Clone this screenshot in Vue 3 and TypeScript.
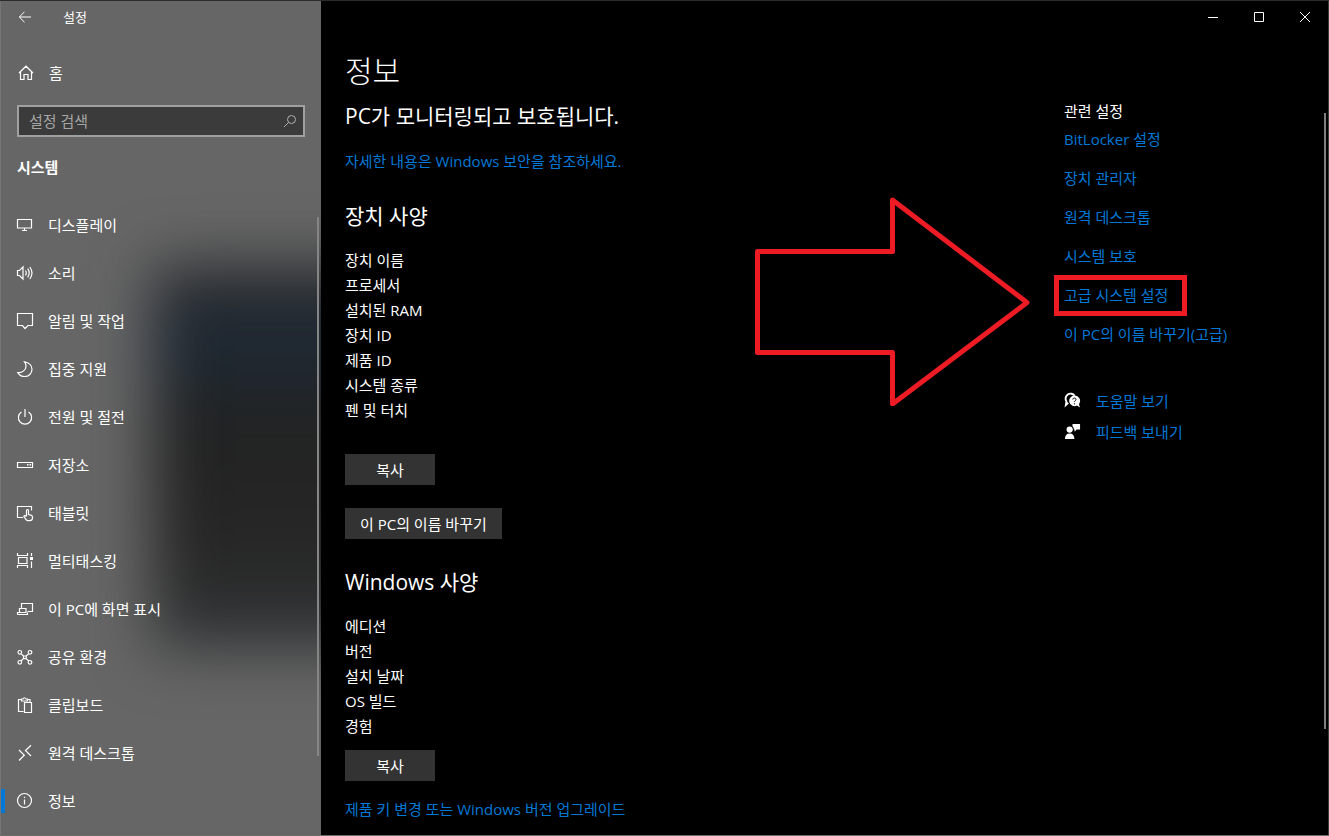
<script setup lang="ts">
import { ref } from 'vue'

interface NavItem {
  label: string
  path: string
  solid?: string
}

const query = ref('')
const current = ref('정보')

const navItems: NavItem[] = [
  { label: '디스플레이', path: 'M1.5 3.5h14v8.5h-14zM8.5 12v2M6 14.5h5' },
  {
    label: '소리',
    path: 'M1.5 6.5h2l3.5-3.5v12l-3.5-3.5h-2zM9.5 6.5q1.6 2.5 0 5M11.7 4.7q3 4.3 0 8.6M13.8 3q4.4 6 0 12'
  },
  { label: '알림 및 작업', path: 'M1.5 1.5h15v12h-4.500l-3 3-2.500-3h-5z' },
  {
    label: '집중 지원',
    path: 'M8.500 1.800C13 2.500 16 5.500 16 9.200C16 13.500 12.800 16.500 8.800 16.500C5.800 16.500 3.200 15 1.800 12.600C6.500 13 10 9.800 10 6.200C10 4.500 9.500 3 8.500 1.800z'
  },
  { label: '전원 및 절전', path: 'M9 1v8M5.500 4a6.600 6.600 0 1 0 7 0' },
  { label: '저장소', path: 'M1.5 6.500h15v5h-15z', solid: 'M11 8h1.500v1.500h-1.500zM13.500 8h1.500v1.500h-1.500z' },
  {
    label: '태블릿',
    path: 'M7 13.500h-5.500v-11h14v4M10.500 12v-5.500a1 1 0 0 1 2 0v4l2.500.6q1.500.4 1.500 2v.6q0 3-2.800 3h-1.400q-1.600 0-2.600-1.600l-1.900-2.800q.8-1.300 2.700.2'
  },
  {
    label: '멀티태스킹',
    path: 'M1.5 1v2.500h10v-2.500M2.500 5.500h8.500v6h-8.500zM1.5 16v-2.500h10v2.500M15.500 1v3M15.500 9.500v6.500',
    solid: 'M14 5h3v3h-3z'
  },
  { label: '이 PC에 화면 표시', path: 'M5.500 8v-4.500h11v8h-5M3.500 8.500h6.500v4h-6.500zM1.5 14.500h10v-2M1.5 14.500v-2h2' },
  {
    label: '공유 환경',
    path: 'M5 5.600l2.500 2.400M12.700 5.600l-2.500 2.400M5 13l2.500-2.400M12.700 13l-2.500-2.400M7.500 8h2.700v2.600h-2.700zM2 4.300a1.800 1.800 0 1 0 3.600 0a1.800 1.800 0 1 0-3.600 0M12.200 4.300a1.800 1.800 0 1 0 3.600 0a1.800 1.800 0 1 0-3.600 0M2 14.300a1.800 1.800 0 1 0 3.600 0a1.800 1.800 0 1 0-3.600 0M12.200 14.300a1.800 1.800 0 1 0 3.600 0a1.800 1.800 0 1 0-3.600 0'
  },
  {
    label: '클립보드',
    path: 'M7.500 15.500h-5v-12h3M11.500 3.500h2.500v3M5.500 5v-2h1.500q1.500-2.500 3 0h1.500v2zM8.500 6.500h7v10h-7z'
  },
  { label: '원격 데스크톱', path: 'M3 6l5.300 5.200-5.300 5.300M15 1.200l-5.500 5.300 5.500 5.500' },
  { label: '정보', path: 'M1.500 8.500a7 7 0 1 0 14 0a7 7 0 1 0-14 0M8.500 7.500v5M8.500 4.800v1.200' }
]

const deviceSpecs: string[] = ['장치 이름', '프로세서', '설치된 RAM', '장치 ID', '제품 ID', '시스템 종류', '펜 및 터치']
const windowsSpecs: string[] = ['에디션', '버전', '설치 날짜', 'OS 빌드', '경험']

const relatedLinks: { label: string; marked?: boolean }[] = [
  { label: 'BitLocker 설정' },
  { label: '장치 관리자' },
  { label: '원격 데스크톱' },
  { label: '시스템 보호' },
  { label: '고급 시스템 설정', marked: true },
  { label: '이 PC의 이름 바꾸기(고급)' }
]
</script>

<template>
  <div class="window">
    <nav class="sidebar" aria-label="설정">
      <div class="backdrop"></div>
      <header class="side-title">
        <button class="back" type="button" aria-label="뒤로">
          <svg width="14" height="14" viewBox="0 0 14 14"><path d="M13 7H1.500M6.500 1.800L1.300 7l5.200 5.200" /></svg>
        </button>
        <span>설정</span>
      </header>
      <a class="home" href="#home">
        <svg width="18" height="18" viewBox="0 0 18 18">
          <path d="M2 9l7-6.800L16 9M3.500 8v7.500h3.500v-5h4v5h3.500V8" />
        </svg>
        <span>홈</span>
      </a>
      <div class="search">
        <input v-model="query" type="text" placeholder="설정 검색" aria-label="설정 검색" />
        <svg width="14" height="14" viewBox="0 0 14 14"><circle cx="8.500" cy="5.500" r="4" /><path d="M5.700 8.300L1 13" /></svg>
      </div>
      <h2 class="category">시스템</h2>
      <ul class="nav-list">
        <li v-for="item in navItems" :key="item.label">
          <a
            href="#"
            class="nav-item"
            :class="{ active: current === item.label }"
            @click.prevent="current = item.label"
          >
            <svg width="18" height="18" viewBox="0 0 18 18">
              <path :d="item.path" />
              <path v-if="item.solid" class="solid" :d="item.solid" />
            </svg>
            <span>{{ item.label }}</span>
          </a>
        </li>
      </ul>
      <div class="side-scroll"></div>
    </nav>

    <div class="main">
      <div class="caption">
        <button type="button" aria-label="최소화">
          <svg width="12" height="12" viewBox="0 0 12 12"><path d="M1 6.500h10" /></svg>
        </button>
        <button type="button" aria-label="최대화">
          <svg width="12" height="12" viewBox="0 0 12 12"><path d="M1.500 1.500h9v9h-9z" /></svg>
        </button>
        <button type="button" aria-label="닫기">
          <svg width="12" height="12" viewBox="0 0 12 12"><path d="M1 1l10 10M11 1L1 11" /></svg>
        </button>
      </div>

      <div class="body">
        <main class="content">
          <h1>정보</h1>
          <p class="status">PC가 모니터링되고 보호됩니다.</p>
          <a class="link" href="#security">자세한 내용은 Windows 보안을 참조하세요.</a>

          <h2 class="section">장치 사양</h2>
          <ul class="specs">
            <li v-for="spec in deviceSpecs" :key="spec">{{ spec }}</li>
          </ul>
          <div class="actions">
            <button class="btn" type="button">복사</button>
            <button class="btn" type="button">이 PC의 이름 바꾸기</button>
          </div>

          <h2 class="section">Windows 사양</h2>
          <ul class="specs">
            <li v-for="spec in windowsSpecs" :key="spec">{{ spec }}</li>
          </ul>
          <div class="actions compact">
            <button class="btn" type="button">복사</button>
          </div>
          <a class="link upgrade" href="#upgrade">제품 키 변경 또는 Windows 버전 업그레이드</a>
        </main>

        <aside class="related">
          <h3>관련 설정</h3>
          <ul class="related-list">
            <li v-for="item in relatedLinks" :key="item.label">
              <a class="link" :class="{ marked: item.marked }" href="#">{{ item.label }}</a>
            </li>
          </ul>
          <ul class="support">
            <li>
              <svg width="17" height="17" viewBox="0 0 18 18">
                <path class="line" d="M4.500 11.500l-2.500 2.300.6-3.800A5 5 0 1 1 11.300 4" />
                <path class="solid" d="M11 3.800a5.600 5.600 0 1 0 2.800 10.500l3 2.200-.9-3.800A5.600 5.600 0 0 0 11 3.800z" />
                <path class="mark" d="M9.300 8q.1-1.600 1.700-1.600t1.700 1.400q0 .9-1 1.500-.7.500-.7 1.400M11 11.900v1.300" />
              </svg>
              <a class="link" href="#help">도움말 보기</a>
            </li>
            <li>
              <svg width="17" height="17" viewBox="0 0 18 18">
                <circle class="solid" cx="6" cy="7" r="3.300" />
                <path class="solid" d="M1 17q0-6 5-6t5 6zM9 1h8v6h-3.500l-2.300 2.200V7H10.500Q10.500 4.500 9 3.500z" />
              </svg>
              <a class="link" href="#feedback">피드백 보내기</a>
            </li>
          </ul>
          <svg class="arrow" width="275" height="209" viewBox="0 0 275 209" aria-hidden="true">
            <path d="M2.500 54.500h135V3L272 105.500L137.500 207V155.500h-135z" />
          </svg>
        </aside>
      </div>
      <div class="main-scroll"></div>
    </div>
  </div>
</template>

<style>
html,
body {
  background: #000;
}
</style>

<style scoped>
* {
  box-sizing: border-box;
}

.window {
  display: grid;
  grid-template-columns: 321px 1fr;
  min-height: 100vh;
  border-top: 1px solid #2b2d2d;
  border-bottom: 1px solid #6c6c6c;
  background: #000;
  color: #fff;
  font: 15px/24px "Open Sans", "Noto Sans CJK KR", sans-serif;
}

ul,
h1,
h2,
h3,
p {
  margin: 0;
  padding: 0;
  list-style: none;
  font-weight: 400;
}

button {
  border: 0;
  padding: 0;
  background: none;
  color: inherit;
  font: inherit;
}

svg {
  display: block;
  flex: none;
  fill: none;
  stroke: #fff;
  stroke-width: 1;
}

.solid {
  fill: #fff;
  stroke: none;
}

.sidebar {
  position: relative;
  overflow: hidden;
  border-left: 1px solid #747474;
  background: #666;
}

.sidebar > * {
  position: relative;
}

.sidebar > .backdrop {
  position: absolute;
  left: 152px;
  right: -90px;
  top: 264px;
  height: 384px;
  background: linear-gradient(#2c2c2c, #1d2835 20%, #20262a 32%, #222 42%, #272727 75%, #343638);
  filter: blur(30px);
}

.side-title {
  display: flex;
  align-items: center;
  height: 32px;
  padding-left: 17px;
  font-size: 13px;
}

.back {
  width: 45px;
}

.home {
  display: flex;
  align-items: center;
  gap: 14px;
  height: 32px;
  margin-top: 24px;
  padding-left: 16px;
  color: #fff;
  text-decoration: none;
}

.home svg,
.nav-item svg {
  stroke-width: 1.2;
}

.search {
  display: flex;
  align-items: center;
  height: 32px;
  margin: 16px 16px 0;
  padding: 0 6px 0 10px;
  border: 2px solid #a0a0a0;
  background: #3b3b3b;
}

.search input {
  flex: 1;
  min-width: 0;
  padding: 0;
  border: 0;
  outline: 0;
  background: none;
  color: #fff;
  font: inherit;
}

.search input::placeholder {
  color: #a6a6a6;
  opacity: 1;
}

.search svg {
  stroke: #b0b0b0;
}

.category {
  margin: 18px 16px 0;
  font-size: 15px;
  font-weight: 700;
  line-height: 24px;
}

.nav-list {
  margin-top: 22px;
}

.nav-item {
  display: flex;
  align-items: center;
  gap: 14px;
  height: 48px;
  padding-left: 15px;
  color: #fff;
  text-decoration: none;
}

.nav-item.active {
  background: linear-gradient(#0078d7, #0078d7) 0 50% / 4px 24px no-repeat;
}

.sidebar > .side-scroll {
  position: absolute;
  top: 216px;
  right: 2px;
  bottom: 79px;
  width: 2px;
  background: #858585;
}

.main {
  position: relative;
  min-width: 0;
  border-right: 1px solid #3c3c3c;
}

.caption {
  display: flex;
  justify-content: flex-end;
  height: 32px;
}

.caption button {
  display: flex;
  align-items: center;
  justify-content: center;
  width: 46px;
}

.body {
  display: flex;
  padding-left: 24px;
}

.content {
  flex: 1;
  min-width: 0;
  padding-top: 18px;
}

h1 {
  font-size: 30px;
  font-weight: 300;
  line-height: 40px;
}

.status {
  margin: 10px 0 18px;
  font-size: 21px;
  line-height: 30px;
}

.link {
  color: #0078d7;
  text-decoration: none;
}

.section {
  margin: 28px 0 17px;
  font-size: 21px;
  line-height: 30px;
}

.specs li {
  line-height: 25px;
}

.actions {
  display: flex;
  flex-direction: column;
  align-items: flex-start;
  gap: 23px;
  margin-top: 31px;
}

.actions.compact {
  margin-top: 11px;
}

.btn {
  min-width: 90px;
  height: 31px;
  padding: 0 15px;
  background: #333;
}

.upgrade {
  display: block;
  margin-top: 16px;
}

.related {
  position: relative;
  width: 264px;
  padding-top: 69px;
}

h3 {
  font-size: 15px;
  line-height: 18px;
}

.related-list li {
  line-height: 39px;
}

.marked {
  position: relative;
}

.marked::after {
  content: "";
  position: absolute;
  inset: -10px -19px -11px -10px;
  border: 5px solid #ed1c24;
}

.support {
  margin-top: 31px;
}

.support li {
  display: flex;
  align-items: center;
  gap: 15px;
  height: 31px;
}

.support .line {
  stroke-width: 2;
}

.support .mark {
  stroke: #000;
}

.arrow {
  position: absolute;
  top: 164px;
  left: -309px;
  stroke: #ed1c24;
  stroke-width: 5;
  stroke-linejoin: round;
}

.main-scroll {
  position: absolute;
  top: 112px;
  right: 2px;
  bottom: 106px;
  width: 2px;
  background: #7f7f7f;
}
</style>
